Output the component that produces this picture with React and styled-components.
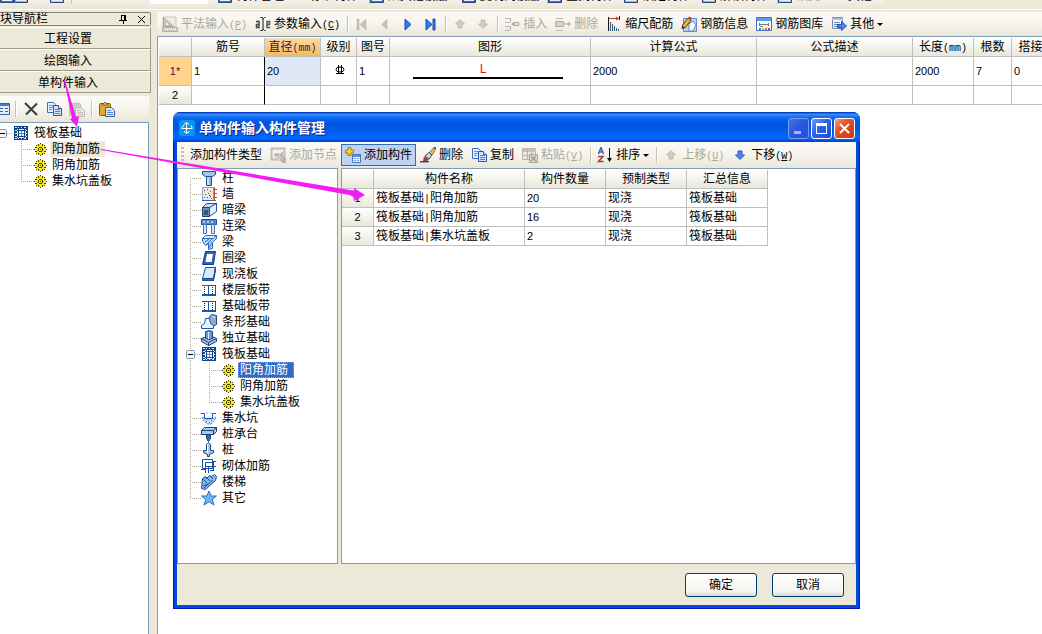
import React from "react";
import styled, { createGlobalStyle, css } from "styled-components";

const Global = createGlobalStyle`
  * { box-sizing: border-box; }
  html, body { margin: 0; padding: 0; background: #fff; }
  body, button, input, table {
    font-family: "Liberation Sans", "Noto Sans CJK SC", sans-serif;
    font-size: 12px;
    line-height: 16px;
    color: #000;
  }
  button { background: none; border: 0; padding: 0; margin: 0; white-space: nowrap; }
  ul { list-style: none; margin: 0; padding: 0; }
`;

const BEIGE = "#ece9d8";
const EDGE = "#7f9db9";
const barFill = "linear-gradient(#fbfaf6, #f6f4ec 50%, #e9e6d8)";
const headFill = "linear-gradient(#fefefd, #f4f3ec 50%, #e9e7da)";
const dotsX = "repeating-linear-gradient(90deg, #aca899 0 1px, transparent 1px 2px)";
const dotsY = "repeating-linear-gradient(#aca899 0 1px, transparent 1px 2px)";

/* ---------- page frame ---------- */
const Page = styled.div`
  position: relative;
  min-height: 100vh;
  display: flex;
  flex-direction: column;
  overflow: hidden;
  background: ${BEIGE};
`;
const TopStrip = styled.header`
  height: 10px;
  flex: none;
  overflow: hidden;
  border-bottom: 1px solid #fff;
  margin-bottom: 2px;
`;
const TopBar = styled.div`
  width: 885px;
  height: 9px;
  display: flex;
  align-items: flex-end;
  padding-bottom: 5px;
  background: linear-gradient(#f3f1e8, #e9e6d8);
`;
const TopItem = styled.button`
  flex: none;
  display: flex;
  align-items: center;
  justify-content: flex-start;
  gap: 4px;
  height: 16px;
  width: ${(p) => p.$w}px;
  color: ${(p) => (p.disabled ? "#aca899" : "#000")};
  border-right: ${(p) => (p.$sep ? "1px solid #c5c2b8" : "0")};
`;
const TopCombo = styled.input`
  width: 58px;
  height: 16px;
  border: 0;
  border-radius: 2px;
  background: #fff;
  margin-right: 10px;
  padding: 0;
`;
const Body = styled.div`
  flex: 1;
  display: flex;
  min-width: 0;
`;

/* ---------- navigation panel ---------- */
const Nav = styled.aside`
  width: 151px;
  flex: none;
  display: flex;
  flex-direction: column;
`;
const NavHead = styled.div`
  height: 14px;
  display: flex;
  align-items: center;
  border: 1px solid #85837a;
  border-left: 0;
  border-radius: 0 2px 2px 0;
  margin-bottom: 1px;
`;
const NavTitle = styled.span`
  flex: 1;
  line-height: 12px;
`;
const HeadButton = styled.button`
  width: 18px;
  height: 12px;
  display: flex;
  align-items: center;
  justify-content: center;
`;
const NavButton = styled.button`
  height: 22px;
  padding: 2px 14px 0 0;
  border-top: 1px solid #fff;
  border-bottom: 1px solid #9d9a8c;
  border-right: 1px solid #9d9a8c;
  background: ${BEIGE};
  text-align: center;
`;
const NavTools = styled.div`
  height: 26px;
  margin: 3px 2px 0 0;
  display: flex;
  align-items: center;
  gap: 5px;
  background: ${barFill};
`;
const NavTool = styled.button`
  width: ${(p) => p.$w || 18}px;
  height: 20px;
  display: flex;
  align-items: center;
  justify-content: center;
`;
const NavDivider = styled.span`
  width: 2px;
  height: 16px;
  border-left: 1px solid #c5c2b8;
  border-right: 1px solid #fff;
`;
const NavTree = styled.ul`
  && { padding-top: 2px; }
  flex: 1;
  margin-right: 2px;
  border-top: 1px solid ${EDGE};
  border-right: 1px solid ${EDGE};
  background: #fff;
`;

/* ---------- tool bars ---------- */
const Work = styled.main`
  flex: 1;
  min-width: 0;
  margin-left: 6px;
  display: flex;
  flex-direction: column;
`;
const ToolBar = styled.div`
  flex: none;
  height: ${(p) => p.$h}px;
  padding-left: 1px;
  display: flex;
  align-items: center;
  overflow: hidden;
  background: ${barFill};
`;
const ToolButton = styled.button`
  flex: none;
  height: 22px;
  display: flex;
  align-items: center;
  gap: 3px;
  padding: 0 4px;
  color: #000;
  &:disabled { color: #aca899; }
  ${(p) =>
    p.$on &&
    css`
      padding: 0 3px;
      border: 1px solid #316ac5;
      background: #c1d2ee;
    `}
`;
const Step = styled.button`
  flex: none;
  width: 23px;
  height: 22px;
  display: flex;
  align-items: center;
  justify-content: center;
`;
const Divider = styled.span`
  flex: none;
  width: 2px;
  height: 16px;
  margin: 0 1px 0 3px;
  border-left: 1px solid #c5c2b8;
  border-right: 1px solid #fff;
`;
const Grip = styled.span`
  width: 3px;
  height: 16px;
  margin: 0 2px 0 3px;
  background: repeating-linear-gradient(#c1beb3 0 2px, transparent 2px 4px);
`;
const Mono = styled.span`
  font-family: "Liberation Mono", monospace;
  font-size: 10px;
  line-height: 0;
`;
const Caret = styled.span`
  width: 6px;
  height: 3px;
  border: solid transparent;
  border-width: 3px 3px 0;
  border-top-color: currentColor;
`;

/* ---------- tables ---------- */
const SheetWrap = styled.div`
  flex: 1;
  overflow: hidden;
  border-top: 1px solid ${EDGE};
  border-left: 1px solid ${EDGE};
  padding: 1px 0 0 1px;
  background: #fff;
`;
const Grid = styled.table`
  table-layout: fixed;
  border-collapse: separate;
  border-spacing: 0;
  width: ${(p) => p.$w}px;
`;
const Th = styled.th`
  height: 19px;
  padding: 0;
  font-weight: 400;
  overflow: hidden;
  white-space: nowrap;
  text-align: center;
  border-right: 1px solid #c0c0c0;
  border-bottom: 1px solid #c0c0c0;
  background: ${headFill};
  ${(p) =>
    p.$hot &&
    css`
      color: #5a0050;
      background: linear-gradient(#fadba6, #f0bd5c);
    `}
`;
const RowHead = styled(Th)`
  font-size: 11px;
  color: ${(p) => (p.$current ? "#5a0050" : "#000")};
  background: ${(p) => (p.$current ? "#ffd58d" : headFill)};
`;
const Td = styled.td`
  height: ${(p) => p.$h}px;
  padding: 0 0 0 2px;
  white-space: nowrap;
  text-align: ${(p) => (p.$center ? "center" : "left")};
  border-right: 1px solid ${(p) => (p.$cursor ? "#000" : "#c0c0c0")};
  border-bottom: 1px solid #c0c0c0;
  background: ${(p) => (p.$lit ? "#dfe8f6" : "#fff")};
`;
const Num = styled.span`
  font-size: 11px;
`;
const Shape = styled.div`
  width: 150px;
  margin: 0 0 0 21px;
  border-bottom: 2px solid #000;
  font-family: "Liberation Mono", monospace;
  line-height: 14px;
  text-align: center;
  color: #f00;
  padding-right: 10px;
`;

/* ---------- tree ---------- */
const TreeRow = styled.li`
  height: 16px;
  display: flex;
  align-items: center;
`;
const Branch = styled.span`
  flex: none;
  display: flex;
  width: ${(p) => p.$w}px;
  height: 16px;
  margin-left: ${(p) => p.$x}px;
  background: ${dotsX} 0 8px / 100% 1px no-repeat;
  &::before {
    content: "";
    width: 1px;
    height: ${(p) => (p.$last || p.$first ? 8 : 16)}px;
    margin-top: ${(p) => (p.$first ? 8 : 0)}px;
    background: ${dotsY};
  }
`;
const Trunk = styled.span`
  flex: none;
  width: 1px;
  height: 16px;
  margin-left: 12px;
  background: ${dotsY};
`;
const Fold = styled.button`
  flex: none;
  width: ${(p) => p.$w}px;
  height: 16px;
  padding-left: ${(p) => p.$x}px;
  display: flex;
  align-items: center;
  background: ${(p) => (p.$x ? css`${dotsY} 12px 0 / 1px 100% no-repeat` : "none")};
  &::after {
    content: "";
    flex: 1;
    height: 1px;
    background: ${dotsX};
  }
`;
const TreeLabel = styled.button`
  height: 16px;
  line-height: 16px;
  margin-left: 3px;
  padding: 0 2px;
  ${(p) =>
    p.$picked &&
    css`
      padding-right: 5px;
      background: #ece9d8;
    `}
  ${(p) =>
    p.$selected &&
    css`
      padding-right: 6px;
      background: #316ac5;
      color: #fff;
      outline: 1px dotted #e0a040;
      outline-offset: -1px;
    `}
`;

/* ---------- dialog window ---------- */
const Dialog = styled.section`
  position: absolute;
  left: 173px;
  top: 112px;
  width: 687px;
  border-radius: 7px 7px 0 0;
  overflow: hidden;
  background: #0846de;
`;
const TitleBar = styled.div`
  height: 30px;
  display: flex;
  align-items: center;
  padding: 2px 5px 0 6px;
  background: linear-gradient(
    #0a3fc4 0 1px, #3a93ff 2px, #1f78f5 4px, #0560ea 7px,
    #0055e0 12px, #005cec 19px, #0068fe 25px, #0062f4 27px, #003fc8 30px
  );
`;
const Title = styled.h1`
  flex: 1;
  margin: 0 0 0 4px;
  font-size: 14px;
  line-height: 20px;
  font-weight: 700;
  color: #fff;
  text-shadow: 1px 1px 0 #0a1f7a;
`;
const WinButton = styled.button`
  width: 21px;
  height: 21px;
  margin-left: 2px;
  display: flex;
  align-items: center;
  justify-content: center;
  border: 1px solid ${(p) => (p.$dim ? "#7c9df0" : "#fff")};
  border-radius: 3px;
  background: ${(p) =>
    p.$close
      ? "linear-gradient(135deg, #f0a088, #e0532c 40%, #c8360e)"
      : p.$dim
      ? "linear-gradient(135deg, #3f74ee, #2a55dd 50%, #2450d8)"
      : "linear-gradient(135deg, #6c9bff, #2a62e8 45%, #1850dd)"};
`;
const Client = styled.div`
  display: flex;
  flex-direction: column;
  border: solid #0846de;
  border-width: 0 4px 4px;
  background: ${BEIGE};
`;
const Frame = styled.div`
  border: solid #0019b8;
  border-width: 0 1px 1px;
`;
const Panes = styled.div`
  display: flex;
  gap: 3px;
  min-height: 396px;
`;
const TypeTree = styled.ul`
  && { padding-top: 1px; }
  width: 161px;
  flex: none;
  border: 1px solid ${EDGE};
  background: #fff;
`;
const ListPane = styled.div`
  flex: 1;
  min-width: 0;
  padding-top: 1px;
  border: 1px solid ${EDGE};
  background: #fff;
`;
const Footer = styled.div`
  height: 41px;
  display: flex;
  align-items: center;
  justify-content: flex-end;
  gap: 15px;
  padding: 1px 12px 0 0;
`;
const PushButton = styled.button`
  width: 72px;
  height: 24px;
  border: 1px solid #003c74;
  border-radius: 3px;
  background: linear-gradient(#fff, #f4f3ee 80%, #dcd8cc);
`;
const Arrows = styled.svg`
  position: absolute;
  left: 0;
  top: 0;
  pointer-events: none;
`;

/* ---------- icons ---------- */
const Svg = ({ w = 16, h = 16, box, children }) => (
  <svg width={w} height={h} viewBox={box || `0 0 ${w} ${h}`} aria-hidden="true">
    {children}
  </svg>
);
const Gear = () => (
  <Svg w={13} h={13}>
    <path d="M5 1h3v1h2v1h1v2h1v3h-1v2h-1v1H8v1H5v-1H3v-1H2V8H1V5h1V3h1V2h2z" fill="#f2e61c" />
    <path d="M4 1h1v2H4zM8 1h1v2H8zM4 10h1v2H4zM8 10h1v2H8zM1 4h2v1H1zM1 8h2v1H1zM10 4h2v1h-2zM10 8h2v1h-2zM2 2h1v1H2zM10 2h1v1h-1zM2 10h1v1H2zM10 10h1v1h-1z" fill="#4a4600" />
    <path d="M5 4h3v1H5zM5 8h3v1H5zM4 5h1v3H4zM8 5h1v3H8zM6 6h1v1H6zM6 0h1v1H6zM6 12h1v1H6zM0 6h1v1H0zM12 6h1v1h-1z" fill="#4a4600" />
  </Svg>
);
const Raft = () => (
  <Svg>
    <path d="M1 1h14v14H1z" fill="#0d4586" />
    <path d="M2 2h2v1H2zM2 5h2v1H2zM2 8h2v1H2zM2 11h2v1H2zM12 5h2v1h-2zM12 8h2v1h-2zM12 11h2v1h-2zM5 2h1v1H5zM8 2h1v1H8zM11 2h2v1h-2zM5 13h1v1H5zM8 13h1v1H8zM11 13h2v1h-2zM2 13h2v1H2z" fill="#dceaff" />
    <path d="M4 4h9v9H4z" fill="#f4f9ff" />
    <path d="M5.500 4v9M11.500 4v9M4 5.500h9M4 11.500h9" stroke="#0d4586" fill="none" />
    <path d="M8.500 6v5M6 8.500h5" stroke="#5f8cc4" fill="none" />
  </Svg>
);
const Box9 = ({ clip }) => (
  <Svg w={clip ? 7 : 9} h={9} box={clip ? "2 0 7 9" : "0 0 9 9"}>
    <rect x=".5" y=".5" width="8" height="8" rx="1" fill="#f6f4ee" stroke="#7898b5" />
    <path d="M2 4h5v1H2z" />
  </Svg>
);
const CopyIcon = () => (
  <Svg>
    <path d="M1.500 1.500h6l2 2v8h-8z" fill="#e4efff" stroke="#3c6cc0" />
    <path d="M3 4.500h4M3 6.500h4M3 8.500h3" stroke="#5b8ee0" />
    <path d="M7.500 4.500h5l3 3v7h-8z" fill="#d3e4ff" stroke="#2a57b0" />
    <path d="M9 8.500h5M9 10.500h5M9 12.500h5" stroke="#4a7fd8" />
    <path d="M12.500 4.500v3h3" fill="#fff" stroke="#2a57b0" />
  </Svg>
);
const PasteIcon = ({ off }) => (
  <Svg>
    <rect x=".5" y="2.500" width="11" height="12" rx="1" fill={off ? "#d2cfc5" : "#e3a62f"} stroke={off ? "#bdbab0" : "#8a5c14"} />
    <path d="M3 4V2.500h2L6 1l1 1.500h2V4z" fill={off ? "#e6e4dc" : "#f7e9a0"} stroke={off ? "#bdbab0" : "#6b5a20"} />
    <path d="M6.500 6.500h6l3 3v6h-9z" fill={off ? "#e9e7df" : "#dbe8fb"} stroke={off ? "#bdbab0" : "#44609c"} />
    <path d="M8 9.500h4M8 11.500h6M8 13.500h6" stroke={off ? "#c4c1b7" : "#6485c4"} />
  </Svg>
);
const Play = ({ kind, off }) => {
  const f = off ? "#c3c1b8" : "#2b62dc";
  const s = off ? "#b5b3aa" : "#1a48b4";
  return (
    <Svg w={13} h={13}>
      {kind === "first" && <path d="M2 1h2v11H2zM11 1v11L5 6.500z" fill={f} stroke={s} strokeWidth=".5" />}
      {kind === "prev" && <path d="M9 1.500v10L3.500 6.500z" fill={f} stroke={s} strokeWidth=".5" />}
      {kind === "next" && <path d="M4 1v11l6-5.500z" fill="#2f7cf6" stroke={s} strokeWidth="1" />}
      {kind === "last" && <path d="M9 1h2v11H9zM2 1v11l6-5.500z" fill="#2f7cf6" stroke={s} strokeWidth="1" />}
    </Svg>
  );
};
const Vert = ({ down, off }) => (
  <Svg>
    <path
      d={down ? "M6 4h4v4h2.500L8 12.500 3.500 8H6z" : "M6 12h4V8h2.500L8 3.500 3.500 8H6z"}
      fill={off ? "#cfcdc5" : "#4a86ee"}
      stroke={off ? "#bebcb3" : "#2a58c0"}
      strokeWidth="1"
    />
  </Svg>
);
const FlatIcon = () => (
  <Svg>
    <path d="M1 1h13v10H1z" fill="#eceae2" stroke="#c8c6bc" />
    <path d="M1.500 1.500l10 9h-10z" fill="#c4c2b8" stroke="#aeaca2" />
    <path d="M4 6l3 3H4z" fill="#f2f1ea" />
    <path d="M.5 11.500h15v4H.5z" fill="#cfcdc4" stroke="#b3b1a6" />
    <path d="M3.500 12v2M5.500 12v2M7.500 12v2M9.500 12v2M11.500 12v2M13.500 12v2" stroke="#f2f1ea" />
  </Svg>
);
const TextIcon = () => (
  <Svg>
    <path d="M1 5.500h3v6H1.500V8.500H4" fill="none" stroke="#444" strokeWidth="1.500" />
    <path d="M15 11.500h-3v-6h2.500v3H12" fill="none" stroke="#555" strokeWidth="1.500" />
    <path d="M5.500 1.500h2l1 1 1-1h1M8 2v12M5.500 14.500h2l1-1 1 1h1" fill="none" stroke="#111" />
  </Svg>
);
const InsertIcon = () => (
  <Svg>
    <path d="M1 2.500h5M1 6.500h5M6.500 2v4M1 10.500h5M1 14.500h5M6.500 10v4" stroke="#b8b6ac" fill="none" />
    <path d="M7 8l3-2v4z" fill="#b0aea4" />
    <path d="M10 6.500h5v3h-5z" fill="#dedcd3" stroke="#b0aea4" />
  </Svg>
);
const DropIcon = () => (
  <Svg>
    <path d="M1 2.500h7M1 14.500h7" stroke="#b8b6ac" />
    <path d="M.5 5.500h8v5h-8z" fill="#d5d3ca" stroke="#b0aea4" />
    <path d="M9 8h6M13 6l2.500 2L13 10" fill="none" stroke="#a8a69c" />
  </Svg>
);
const ScaleIcon = () => (
  <Svg>
    <path d="M2.500 1v14M13.500 0v4" stroke="#111" />
    <path d="M3 2.500h9M10 1l2.500 1.500L10 4" stroke="#b83a28" fill="none" />
    <path d="M4.500 6v9M6.500 8v7M8.500 10v5M10.500 12v3M12.500 13v2" stroke="#39597c" />
  </Svg>
);
const InfoIcon = () => (
  <Svg>
    <path d="M2.500 2.500h13v13h-13z" fill="#bcd3f7" stroke="#5d8bd8" />
    <path d="M8 8l4-3 3 4-3 6H8z" fill="#f4f8ff" stroke="#6b84a8" />
    <path d="M1 10l6-8 3 2-6 8z" fill="#e8b83c" stroke="#5a3a10" />
    <path d="M7 2l1.500-1.500L11 2l-1 2z" fill="#c84030" />
    <path d="M1 10l-.5 3L4 12z" fill="#333" />
  </Svg>
);
const LibIcon = () => (
  <Svg>
    <path d="M.5 1.500h15v13H.5z" fill="#f5f8fd" stroke="#3d74c8" />
    <path d="M1 2h14v3H1z" fill="#5f97e8" />
    <path d="M3 8.500h10M3.500 7v3M12.500 7v3M4 10.500h3" stroke="#777" />
    <path d="M3 12h2v2H3z" fill="#4b86e0" />
    <path d="M6 12h2v2H6z" fill="#e7c22c" />
    <path d="M9 12h2v2H9z" fill="#e06a2c" />
    <path d="M12 12h2v2h-2z" fill="#d23c3c" />
  </Svg>
);
const OtherIcon = () => (
  <Svg>
    <path d="M1.500 1.500h10v11h-10z" fill="#f2f5fb" stroke="#7089b5" />
    <path d="M1 2h11v2H1z" fill="#a9bddf" />
    <path d="M3 6.500h6M3 8.500h4M3 10.500h4" stroke="#7089b5" />
    <path d="M6.500 8.500h4v-3l5 4.500-5 4.500v-3h-4z" fill="#4a86ee" stroke="#2550b0" />
  </Svg>
);
const NodeIcon = () => (
  <Svg>
    <path d="M1.500 1.500h13v11h-13z" fill="#f4f3ed" stroke="#c0beb4" strokeWidth="2" />
    <path d="M4 7l3-1 3 1 3-3v5l3 2v5h-4l-3-4-4-2z" fill="#bab8ae" />
    <path d="M6 9l4 4M8 8l4 4" stroke="#efeee8" />
  </Svg>
);
const AddIcon = () => (
  <Svg>
    <path d="M3 .5h3V3h2.500v3H6v2.500H3V6H.5V3H3z" fill="#f4cf45" stroke="#a8790f" />
    <path d="M7.500 7.500h8v8h-8z" fill="#e9f1ff" stroke="#4474c4" />
    <path d="M8 8h7v2H8z" fill="#5a8fe4" />
    <path d="M9 11.500h2M12 11.500h2M9 13.500h2M12 13.500h2" stroke="#6e94d0" />
  </Svg>
);
const BrushIcon = () => (
  <Svg>
    <path d="M9 6l4.500-5 2 1.500L12 8z" fill="#f0c64a" stroke="#5d5030" strokeWidth=".8" />
    <path d="M13 0l3 0v3z" fill="#3567c8" />
    <path d="M5 9l4-3.500L12 8l-3 4z" fill="#cfd8ea" stroke="#33426a" />
    <path d="M4 9.500L9 12l-2 2H3z" fill="#b3362a" />
    <path d="M0 14h9v1.500H0z" fill="#27509c" />
  </Svg>
);
const PasteGrid = () => (
  <Svg>
    <path d="M.5 1.500h13v11H.5z" fill="#e8e6de" stroke="#b8b6ac" />
    <path d="M1 2h13v3H1z" fill="#c6c4ba" />
    <path d="M1 8.500h12M5.500 2v10M9.500 2v10" stroke="#b8b6ac" />
    <path d="M7.500 7.500h8v8h-8z" fill="#dad8cf" stroke="#a8a69c" />
    <path d="M9 9l5 5M14 9l-5 5" stroke="#a09e94" strokeWidth="1.500" />
  </Svg>
);
const SortIcon = () => (
  <Svg>
    <path d="M1.500 7L4 .5 6.500 7M2.500 5h3" fill="none" stroke="#3b64b8" strokeWidth="1.500" />
    <path d="M1 9.500h5L1.500 14.500h5" fill="none" stroke="#a83a44" strokeWidth="1.500" />
    <path d="M12.500 1v13" stroke="#111" />
    <path d="M10 11h5l-2.500 4z" fill="#111" />
  </Svg>
);
const PanelIcon = () => (
  <Svg w={10}>
    <path d="M-3.500 2.500h13v11h-13z" fill="#e4eefc" stroke="#2d63c0" />
    <path d="M0 3h9v2H0z" fill="#3f77d6" />
    <path d="M0 7.500h3M0 10.500h3M5 7.500h3M5 10.500h3" fill="none" stroke="#3a64a8" />
  </Svg>
);
const CrossIcon = () => (
  <Svg>
    <path d="M2 2l12 12M14 2.500L3 13.500" stroke="#3a3d42" strokeWidth="2" fill="none" />
  </Svg>
);
const Pin = () => (
  <Svg w={9} h={9}>
    <path d="M2 .5h5M2.500 0v5M5.500 0v5M6.500 0v5M0 5.500h8M4.500 6v3" stroke="#000" fill="none" />
  </Svg>
);
const SmallX = () => (
  <Svg w={9} h={9}>
    <path d="M1 1l7 7M8 1L1 8" stroke="#000" fill="none" />
  </Svg>
);
const Rebar = () => (
  <Svg w={10} h={10}>
    <ellipse cx="5" cy="4.500" rx="4" ry="2.500" fill="none" stroke="#000" />
    <path d="M3.500 0v9M6.500 0v9M1 8.500h8" stroke="#000" strokeWidth="1" />
  </Svg>
);

const B = "#1c4f94";
const typeIcons = {
  column: (
    <>
      <path d="M1.500 1.500h13v3l-3 2h-7l-3-2z" fill="#a9c4ea" stroke={B} />
      <path d="M5.500 6.500h5v9h-5z" fill="#cfe0f7" stroke={B} />
      <path d="M9 7v8" stroke="#5d87c2" />
    </>
  ),
  wall: (
    <>
      <path d="M1.500 1.500h11v13h-11z" fill="#efe9e6" stroke="#8aa0c4" />
      <path d="M1 14.500h14" stroke="#2a6ac0" />
      <path d="M3 4h1v1H3zM6 3h1v1H6zM9 5h1v1H9zM4 8h1v1H4zM7 7h1v1H7zM3 11h1v1H3zM6 11h1v1H6zM9 10h1v1H9zM10 12h1v1h-1zM8 9h1v1H8z" fill="#5a4640" />
      <path d="M13.500 1v14M12 3.500h4M12 7.500h4M12 11.500h4" stroke="#c0562e" />
    </>
  ),
  hidden: (
    <>
      <path d="M1.500 5.500l4-4h10l-3 4z" fill="#c8dcf6" stroke={B} />
      <path d="M1.500 5.500h7v9h-7z" fill="#6f8fb8" stroke="#23426e" />
      <path d="M8.500 5.500l7-4v8l-7 5z" fill="#e6f0fd" stroke={B} />
      <path d="M3 8h4v5H3z" fill="#34557f" />
    </>
  ),
  link: (
    <>
      <path d="M.5 1.500h15v5H.5z" fill="#4d86d0" stroke={B} />
      <path d="M2 3h2v2H2zM6 3h2v2H6zM10 3h2v2h-2z" fill="#a9ccf6" />
      <path d="M2.500 6.500h3v9h-3zM10.500 6.500h3v9h-3z" fill="#d7e7fb" stroke="#3f75bd" />
    </>
  ),
  beam: (
    <>
      <path d="M1.500 4.500l3-3h11l-3 3z" fill="#dcebfd" stroke="#2b6bbb" />
      <path d="M1.500 4.500h11l3-3v3l-4 4v6l-4 1v-6l-3 2-3-4z" fill="#b9d6f8" stroke="#2b6bbb" />
      <path d="M4 8l5-4M5 11l6-6M8 14l3-6" stroke="#2b6bbb" />
    </>
  ),
  ring: (
    <>
      <path d="M4.500 1.500h10l-2 13h-11z" fill="#2c66b8" stroke="#123f80" />
      <path d="M6 4h6l-1.500 8H4.500z" fill="#fff" />
    </>
  ),
  slab: (
    <>
      <path d="M4.500 1.500h10l-2 11h-11z" fill="#d9e9fd" stroke="#1a56a8" />
      <path d="M1.500 12.500h11v2h-11zM12.500 12.500l2-11v3l-2 10z" fill="#2c66b8" stroke="#1a4a90" />
    </>
  ),
  band: (
    <>
      <path d="M1 3.500h14M7.500 4v8M14.500 4v8" stroke="#1a56a8" />
      <path d="M3.500 5v7M11.500 5v7" stroke="#222" strokeDasharray="1 1" />
      <path d="M1 12h14v2H1z" fill="#1a56a8" />
    </>
  ),
  strip: (
    <>
      <path d="M6.500 5.500l4-5 5 1v9l-4 2z" fill="#8fa9c9" stroke="#274c80" />
      <path d="M4.500 4.500h4l1 5 3 2v3H.5v-3l3-2z" fill="#eaf3ff" stroke="#1a56a8" />
      <path d="M11 2l3 2" stroke="#e0ebf8" />
    </>
  ),
  pad: (
    <>
      <path d="M.5 8.500l8-3 7 3v3l-8 4-7-4z" fill="#a4c3ec" stroke="#18427c" />
      <path d="M.5 8.500l7 4 8-4M7.500 12.500v3" fill="none" stroke="#18427c" />
      <path d="M4.500 1.500l4-1 3 1v7l-3 1-4-1z" fill="#6f98cf" stroke="#18427c" />
      <path d="M7.500 2v7" stroke="#e2eefc" />
    </>
  ),
  sump: (
    <>
      <path d="M1 7l2 4 3 3h4l3-3 2-4-4 2H5z" fill="#cfe2fa" stroke="#4a84d0" strokeDasharray="2 1" />
      <path d="M0 3.500h3.500v5h8v-5H15M6.500 3h-1M9.500 3h1" fill="none" stroke="#1a56b8" />
      <path d="M5 11h1v1H5zM8 12h1v1H8zM10 10h1v1h-1z" fill="#1a56b8" />
    </>
  ),
  cap: (
    <>
      <path d="M.5 4.500l3-3h12v4l-3 3H.5z" fill="#a9c9f2" stroke="#174478" />
      <path d="M.5 4.500h12l3-3M12.500 4.500v4" fill="none" stroke="#174478" />
      <path d="M5.500 8.500h4v4l-2 3-2-3z" fill="#376ba8" stroke="#174478" />
    </>
  ),
  pile: (
    <>
      <path d="M5.500 2.500l2-2 2 2v6h3v2l-4 2v2h-2v-2l-4-2v-2h3z" fill="#a7c8ee" stroke="#174478" />
      <path d="M6 2h1v9H6z" fill="#fff" />
    </>
  ),
  masonry: (
    <>
      <path d="M1.500 1.500h10v9h-10z" fill="#fff" stroke="#1a4fa0" />
      <path d="M4.500 4.500h7v4h-7z" fill="none" stroke="#1a4fa0" />
      <path d="M0 11.500h4M4.500 9v6M7.500 9v6M12 3.500h3M12.500 3v9M10 8.500h5M9 12.500h4" stroke="#1a4fa0" fill="none" />
    </>
  ),
  stair: (
    <>
      <path d="M1.500 4.500l3-2 1 2 3-3 2 1 3-2 2 2-1 4-10 9-4-1z" fill="#8fb5e6" stroke="#174f98" />
      <path d="M2 5l4 4M5 3l4 4M9 2l3 3M2 12l5-2M3 14l9-8" stroke="#174f98" fill="none" />
    </>
  ),
  star: <path d="M8 1l2.200 5h5.300l-4.200 3.500 1.700 5.500L8 11.800 3 15l1.700-5.500L.5 6h5.300z" fill="#6cb6f4" stroke="#2a6fc4" />,
};
const TypeIcon = ({ kind }) => (kind === "raft" ? <Raft /> : <Svg>{typeIcons[kind]}</Svg>);

/* ---------- data ---------- */
const types = [
  ["柱", "column"], ["墙", "wall"], ["暗梁", "hidden"], ["连梁", "link"], ["梁", "beam"],
  ["圈梁", "ring"], ["现浇板", "slab"], ["楼层板带", "band"], ["基础板带", "band"],
  ["条形基础", "strip"], ["独立基础", "pad"], ["筏板基础", "raft"], ["集水坑", "sump"],
  ["桩承台", "cap"], ["桩", "pile"], ["砌体加筋", "masonry"], ["楼梯", "stair"], ["其它", "star"],
];
const parts = [["阳角加筋", 20], ["阴角加筋", 16], ["集水坑盖板", 2]];

const Key = ({ k }) => (
  <Mono>
    (<u>{k}</u>)
  </Mono>
);
const Tool = ({ icon, label, k, off, on, caret }) => (
  <ToolButton disabled={off} $on={on}>
    {icon}
    <span>
      {label}
      {k && <Key k={k} />}
    </span>
    {caret && <Caret />}
  </ToolButton>
);
const TinyDoc = ({ c = "#4474c4" }) => (
  <Svg w={14} h={14}>
    <path d="M.5 2.500h13v11H.5z" fill={c} stroke="#2a4680" />
    <path d="M2 11h10v1H2z" fill="#e8eefc" />
  </Svg>
);

function TopTools() {
  return (
    <TopStrip>
      <TopBar>
        <TopItem $w={14} aria-label="新建"><TinyDoc /></TopItem>
        <TopItem $w={36} aria-label="打开"><TinyDoc c="#e8a828" /></TopItem>
        <TopItem $w={22} $sep aria-label="保存"><TinyDoc c="#c8c6bc" /></TopItem>
        <TopItem $w={78} aria-label="撤销" />
        <TopCombo aria-label="楼层" />
        <TopItem $w={92}><TinyDoc />构件管理</TopItem>
        <TopItem $w={60} $sep>标准构件</TopItem>
        <TopItem $w={92}><TinyDoc />从其他楼层</TopItem>
        <TopItem $w={86} $sep><TinyDoc c="#5050b8" />复制到楼层</TopItem>
        <TopItem $w={76}><TinyDoc />查找构件</TopItem>
        <TopItem $w={78}><TinyDoc c="#e8a828" />锁定构件</TopItem>
        <TopItem $w={76} $sep><TinyDoc c="#e8a828" />解锁构件</TopItem>
        <TopItem $w={70} disabled><TinyDoc c="#c8c6bc" />恢复</TopItem>
        <TopItem $w={28}>其他</TopItem>
      </TopBar>
    </TopStrip>
  );
}

function Navigator() {
  return (
    <Nav>
      <NavHead>
        <NavTitle>块导航栏</NavTitle>
        <HeadButton aria-label="固定"><Pin /></HeadButton>
        <HeadButton aria-label="关闭导航栏"><SmallX /></HeadButton>
      </NavHead>
      <NavButton>工程设置</NavButton>
      <NavButton>绘图输入</NavButton>
      <NavButton>单构件输入</NavButton>
      <NavTools>
        <NavTool $w={10} aria-label="构件管理"><PanelIcon /></NavTool>
        <NavDivider />
        <NavTool aria-label="删除构件"><CrossIcon /></NavTool>
        <NavTool aria-label="复制构件"><CopyIcon /></NavTool>
        <NavTool disabled aria-label="粘贴"><PasteIcon off /></NavTool>
        <NavDivider />
        <NavTool aria-label="粘贴构件"><PasteIcon /></NavTool>
      </NavTools>
      <NavTree>
        <TreeRow>
          <Fold $w={13} $x={0} aria-label="折叠"><Box9 clip /></Fold>
          <Raft />
          <TreeLabel>筏板基础</TreeLabel>
        </TreeRow>
        {parts.map(([name], i) => (
          <TreeRow key={name}>
            <Branch $x={21} $w={13} $last={i === 2} />
            <Gear />
            <TreeLabel $picked={i === 0}>{name}</TreeLabel>
          </TreeRow>
        ))}
      </NavTree>
    </Nav>
  );
}

const sheetCols = [33, 73, 56, 36, 33, 201, 166, 156, 61, 38, 38];

function Sheet() {
  return (
    <SheetWrap>
      <Grid $w={891}>
        <colgroup>
          {sheetCols.map((w, i) => (
            <col key={i} width={w} />
          ))}
        </colgroup>
        <thead>
          <tr>
            <Th />
            <Th>筋号</Th>
            <Th $hot>直径<Mono>(mm)</Mono></Th>
            <Th>级别</Th>
            <Th>图号</Th>
            <Th>图形</Th>
            <Th>计算公式</Th>
            <Th>公式描述</Th>
            <Th>长度<Mono>(mm)</Mono></Th>
            <Th>根数</Th>
            <Th>搭接</Th>
          </tr>
        </thead>
        <tbody>
          <tr>
            <RowHead scope="row" $current>1*</RowHead>
            <Td $h={29} $cursor><Num>1</Num></Td>
            <Td $lit><Num>20</Num></Td>
            <Td $center><Rebar /></Td>
            <Td><Num>1</Num></Td>
            <Td><Shape>L</Shape></Td>
            <Td><Num>2000</Num></Td>
            <Td />
            <Td><Num>2000</Num></Td>
            <Td><Num>7</Num></Td>
            <Td><Num>0</Num></Td>
          </tr>
          <tr>
            <RowHead scope="row">2</RowHead>
            <Td $h={19} $cursor />
            {sheetCols.slice(2).map((_, i) => (
              <Td key={i} />
            ))}
          </tr>
        </tbody>
      </Grid>
    </SheetWrap>
  );
}

function TypeList() {
  return (
    <TypeTree>
      {types.map(([name, kind], i) => (
        <React.Fragment key={name}>
          <TreeRow>
            {kind === "raft" ? (
              <Fold $w={23} $x={8} aria-label="折叠"><Box9 /></Fold>
            ) : (
              <Branch $x={12} $w={11} $first={i === 0} $last={i === types.length - 1} />
            )}
            <TypeIcon kind={kind} />
            <TreeLabel>{name}</TreeLabel>
          </TreeRow>
          {kind === "raft" &&
            parts.map(([part], j) => (
              <TreeRow key={part}>
                <Trunk />
                <Branch $x={18} $w={13} $last={j === 2} />
                <Gear />
                <TreeLabel $selected={j === 0}>{part}</TreeLabel>
              </TreeRow>
            ))}
        </React.Fragment>
      ))}
    </TypeTree>
  );
}

function ManagerDialog() {
  return (
    <Dialog role="dialog" aria-labelledby="dlg-title">
      <TitleBar>
        <Svg>
          <rect width="16" height="16" rx="3" fill="#0d93f2" />
          <path d="M7.500 2v12M3 8.500h10M5 5L2.500 8.500M12 5.500l1.500 3M5 4.500l2.500-2 2.500 2M5 11.500q2.500 3 5.500 0" fill="none" stroke="#fff" />
        </Svg>
        <Title id="dlg-title">单构件输入构件管理</Title>
        <WinButton $dim aria-label="最小化">
          <Svg w={13} h={13}><path d="M2 9h7v3H2z" fill="#9db8f6" /></Svg>
        </WinButton>
        <WinButton aria-label="最大化">
          <Svg w={13} h={13}><path d="M1 1h11v11H1zM2 4v7h9V4z" fill="#fff" fillRule="evenodd" /></Svg>
        </WinButton>
        <WinButton $close aria-label="关闭">
          <Svg w={13} h={13}><path d="M2 2l9 9M11 2l-9 9" stroke="#fff" strokeWidth="2" /></Svg>
        </WinButton>
      </TitleBar>
      <Frame>
        <ClientInner>
          <ToolBar $h={26}>
            <Grip />
            <Tool label="添加构件类型" />
            <Tool icon={<NodeIcon />} label="添加节点" off />
            <Tool icon={<AddIcon />} label="添加构件" on />
            <Tool icon={<BrushIcon />} label="删除" />
            <Tool icon={<CopyIcon />} label="复制" />
            <Tool icon={<PasteGrid />} label="粘贴" k="V" off />
            <Divider />
            <Tool icon={<SortIcon />} label="排序" caret />
            <Divider />
            <Tool icon={<Vert off />} label="上移" k="U" off />
            <Tool icon={<Vert down />} label="下移" k="W" />
          </ToolBar>
          <Panes>
            <TypeList />
            <ListPane>
              <Grid $w={426}>
                <colgroup>
                  {[32, 151, 81, 81, 81].map((w, i) => (
                    <col key={i} width={w} />
                  ))}
                </colgroup>
                <thead>
                  <tr>
                    <Th />
                    <Th>构件名称</Th>
                    <Th>构件数量</Th>
                    <Th>预制类型</Th>
                    <Th>汇总信息</Th>
                  </tr>
                </thead>
                <tbody>
                  {parts.map(([name, count], i) => (
                    <tr key={name}>
                      <RowHead scope="row">{i + 1}</RowHead>
                      <Td $h={19}>筏板基础<Mono>|</Mono>{name}</Td>
                      <Td><Num>{count}</Num></Td>
                      <Td>现浇</Td>
                      <Td>筏板基础</Td>
                    </tr>
                  ))}
                </tbody>
              </Grid>
            </ListPane>
          </Panes>
          <Footer>
            <PushButton>确定</PushButton>
            <PushButton>取消</PushButton>
          </Footer>
        </ClientInner>
      </Frame>
    </Dialog>
  );
}
const ClientInner = styled(Client)`
  border-width: 0 3px 3px;
`;

export default function App() {
  return (
    <Page>
      <Global />
      <TopTools />
      <Body>
        <Navigator />
        <Work>
          <ToolBar $h={24}>
            <Tool icon={<FlatIcon />} label="平法输入" k="P" off />
            <Tool icon={<TextIcon />} label="参数输入" k="C" />
            <Divider />
            <Step disabled aria-label="首条"><Play kind="first" off /></Step>
            <Step disabled aria-label="上一条"><Play kind="prev" off /></Step>
            <Step aria-label="下一条"><Play kind="next" /></Step>
            <Step aria-label="末条"><Play kind="last" /></Step>
            <Divider />
            <Step disabled aria-label="上移"><Vert off /></Step>
            <Step disabled aria-label="下移"><Vert down off /></Step>
            <Divider />
            <Tool icon={<InsertIcon />} label="插入" off />
            <Tool icon={<DropIcon />} label="删除" off />
            <Tool icon={<ScaleIcon />} label="缩尺配筋" />
            <Tool icon={<InfoIcon />} label="钢筋信息" />
            <Tool icon={<LibIcon />} label="钢筋图库" />
            <Tool icon={<OtherIcon />} label="其他" caret />
          </ToolBar>
          <Sheet />
        </Work>
      </Body>
      <ManagerDialog />
      <Arrows width="370" height="210" viewBox="0 0 370 210" aria-hidden="true">
        <g fill="#f31cf3">
          <path d="M64 80h1l11 37 3-1-2 11-7-8 2-1z" />
          <path d="M101 149l249 41 4 .5V188l11 7-11 6-.5-4-4-2L101 150z" />
        </g>
      </Arrows>
    </Page>
  );
}
